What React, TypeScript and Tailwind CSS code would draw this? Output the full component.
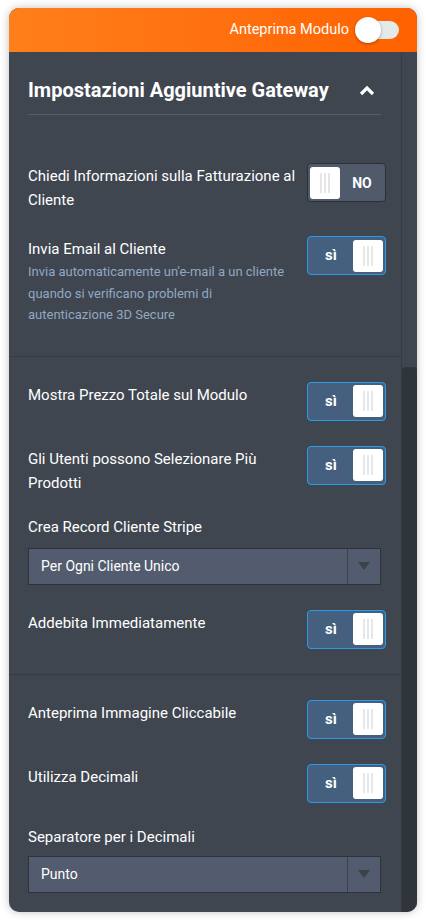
import React from "react";

const font = { fontFamily: 'Roboto, "Noto Sans", sans-serif' };

function Knob() {
  return (
    <div className="flex h-[32px] w-[30px] items-center justify-center gap-[2px] rounded-[3px] bg-white">
      <span className="h-[20px] w-[2px] bg-[#e6e6e6]" />
      <span className="h-[20px] w-[2px] bg-[#e6e6e6]" />
      <span className="h-[20px] w-[2px] bg-[#e6e6e6]" />
    </div>
  );
}

function Toggle({ on }: { on: boolean }) {
  if (on) {
    return (
      <div className="flex h-[39px] w-[79px] shrink-0 items-center justify-between rounded-[4px] border border-[#2a9be8] bg-[#44607e] pl-[3px] pr-[2px]">
        <span className="w-[40px] text-center text-[15px] font-bold leading-none text-white">sì</span>
        <Knob />
      </div>
    );
  }
  return (
    <div className="flex h-[39px] w-[79px] shrink-0 items-center justify-between rounded-[4px] border border-[#2b3139] bg-[#505a6b] pl-[2px] pr-[3px]">
      <Knob />
      <span className="w-[40px] text-center text-[14px] font-bold leading-none text-white">NO</span>
    </div>
  );
}

function Row({ label, on, desc, className = "" }: { label: string; on: boolean; desc?: string; className?: string }) {
  return (
    <div className={"-mr-[5px] flex items-start justify-between gap-[4px] " + className}>
      <div className="flex-1 pt-px">
        <div className="text-[15px] leading-[24px] text-white">{label}</div>
        {desc && <div className="max-w-[262px] text-[13px] leading-[21.5px] text-[#92a8c2]">{desc}</div>}
      </div>
      <Toggle on={on} />
    </div>
  );
}

function Select({ value }: { value: string }) {
  return (
    <div className="flex h-[37px] w-full items-stretch border border-[#2d333b] bg-[#525c6e]">
      <div className="flex flex-1 items-center pl-[12px] text-[14px] text-white">{value}</div>
      <div className="flex w-[33px] items-center justify-center border-l border-[#3a414b]">
        <svg width="12" height="8" viewBox="0 0 12 8">
          <polygon points="0,0 12,0 6,8" fill="#3b424c" />
        </svg>
      </div>
    </div>
  );
}

export default function App() {
  return (
    <div className="min-h-[923px] w-[426px] bg-white pl-[9px] pt-[8px]" style={font}>
      <div className="flex h-[904px] w-[408px] flex-col overflow-hidden rounded-[10px] bg-[#3f4650] shadow-[0_0_8px_rgba(0,0,0,0.25)]">
        <div className="flex h-[44px] shrink-0 items-center justify-end bg-gradient-to-r from-[#ff7f1a] to-[#ff6100] pr-[18px]">
          <span className="mr-[6px] text-[14.5px] text-white">Anteprima Modulo</span>
          <div className="relative h-[26px] w-[44px]">
            <div className="absolute right-0 top-[4px] h-[18px] w-[38px] rounded-full bg-[#e4eaea]" />
            <div className="absolute left-0 top-0 h-[26px] w-[26px] rounded-full bg-white shadow-[0_1px_3px_rgba(0,0,0,0.35)]" />
          </div>
        </div>
        <div className="flex flex-1">
          <div className="flex-1">
            <div className="px-[19px] pr-[20px]">
              <div className="flex items-center justify-between border-b border-[#535d6c] pb-[10px] pt-[24px]">
                <span className="text-[20px] font-bold leading-[28px] text-white">Impostazioni Aggiuntive Gateway</span>
                <svg width="16" height="11" viewBox="0 0 16 11" className="mr-[6px]">
                  <polyline points="2,9 8,3 14,9" fill="none" stroke="white" strokeWidth="3.2" />
                </svg>
              </div>
              <Row className="mt-[48px]" label="Chiedi Informazioni sulla Fatturazione al Cliente" on={false} />
              <Row
                className="mt-[24px]"
                label="Invia Email al Cliente"
                on={true}
                desc="Invia automaticamente un'e-mail a un cliente quando si verificano problemi di autenticazione 3D Secure"
              />
            </div>
            <div className="mt-[30px] border-t border-[#363c45]" />
            <div className="px-[19px] pr-[20px]">
              <Row className="mt-[25px]" label="Mostra Prezzo Totale sul Modulo" on={true} />
              <Row className="mt-[25px]" label="Gli Utenti possono Selezionare Più Prodotti" on={true} />
              <div className="mt-[20px] text-[15px] leading-[24px] text-white">Crea Record Cliente Stripe</div>
              <div className="mt-[9px]">
                <Select value="Per Ogni Cliente Unico" />
              </div>
              <Row className="mt-[25px]" label="Addebita Immediatamente" on={true} />
            </div>
            <div className="mt-[25px] border-t border-[#363c45]" />
            <div className="px-[19px] pr-[20px]">
              <Row className="mt-[25px]" label="Anteprima Immagine Cliccabile" on={true} />
              <Row className="mt-[25px]" label="Utilizza Decimali" on={true} />
              <div className="mt-[22px] text-[15px] leading-[24px] text-white">Separatore per i Decimali</div>
              <div className="mt-[7px]">
                <Select value="Punto" />
              </div>
            </div>
          </div>
          <div className="flex w-[16px] flex-col border-l border-[#363c45] pt-[315px]">
            <div className="flex-1 rounded-t-[4px] bg-[#30353c]" />
          </div>
        </div>
      </div>
    </div>
  );
}
